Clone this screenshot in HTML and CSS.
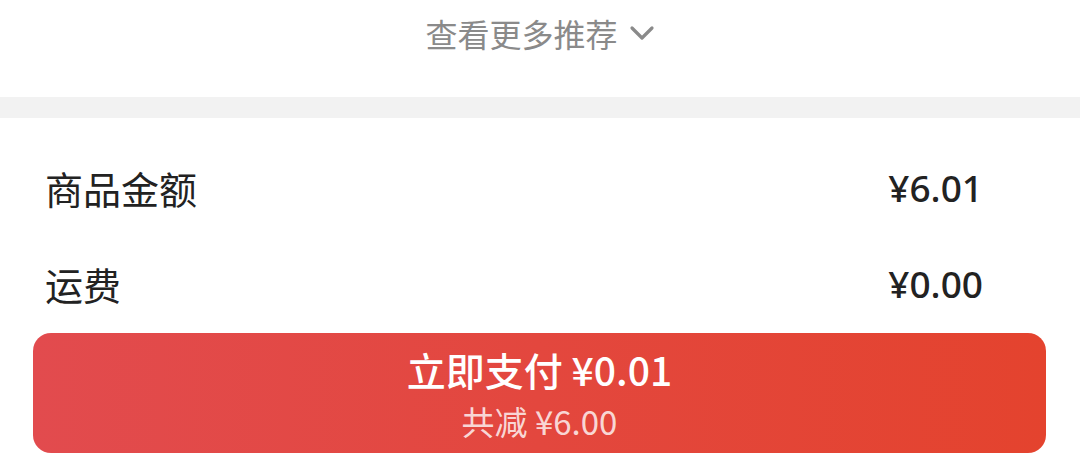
FILE: index.html
```html
<!DOCTYPE html>
<html lang="zh-CN">
<head>
  <meta charset="UTF-8">
  <meta name="viewport" content="width=device-width, initial-scale=1.0">
  <title>订单支付</title>
  <link rel="stylesheet" href="styles.css">
</head>
<body>
  <!-- More recommendations -->
  <div class="more">
    <span>查看更多推荐</span>
    <svg class="chevron" width="26" height="18" viewBox="0 0 26 18">
      <path d="M3 4 L13 14 L23 4" fill="none" stroke="#8a8a8a" stroke-width="3.2" stroke-linecap="round" stroke-linejoin="round"/>
    </svg>
  </div>

  <div class="divider"></div>

  <!-- Price summary -->
  <div class="summary">
    <div class="row">
      <span class="label">商品金额</span>
      <span class="value">¥6.01</span>
    </div>
    <div class="row">
      <span class="label">运费</span>
      <span class="value">¥0.00</span>
    </div>
  </div>

  <!-- Pay button -->
  <div class="pay-wrap">
    <button class="pay">
      <span class="pay-main">立即支付 ¥0.01</span>
      <span class="pay-sub">共减 ¥6.00</span>
    </button>
  </div>
</body>
</html>
```

FILE: styles.css
```css
body {
  margin: 0;
  width: 1080px;
  height: 460px;
  overflow: hidden;
  background: #fff;
  font-family: "Noto Sans CJK SC", "Noto Sans", sans-serif;
  color: #222;
}
.more {
  height: 97px;
  display: flex;
  justify-content: center;
  align-items: flex-start;
  padding-top: 11px;
  box-sizing: border-box;
  color: #8a8a8a;
  font-size: 32px;
  line-height: 44px;
}
.more .chevron {
  margin-left: 11px;
  margin-top: 13px;
}
.divider {
  height: 21px;
  background: #f2f2f2;
}
.summary {
  padding: 0 97px 0 45px;
}
.row {
  display: flex;
  justify-content: space-between;
  align-items: center;
  height: 96px;
}
.row:first-child {
  margin-top: 21px;
}
.label {
  font-size: 38px;
  color: #222;
}
.value {
  font-family: "Noto Sans", "Noto Sans CJK SC", sans-serif;
  font-size: 37px;
  font-weight: 500;
  color: #222;
}
.pay-wrap {
  padding: 0 34px 0 33px;
}
.pay {
  width: 100%;
  height: 120px;
  border: none;
  border-radius: 18px;
  background: linear-gradient(90deg, #e24b4e, #e4432e);
  display: flex;
  flex-direction: column;
  align-items: center;
  justify-content: center;
  font-family: inherit;
  color: #fff;
  padding: 0;
  margin-top: 2px;
}
.pay-main {
  font-size: 39px;
  font-weight: 500;
  line-height: normal;
}
.pay-sub {
  font-size: 33px;
  line-height: normal;
  color: rgba(255, 255, 255, 0.8);
}
```
